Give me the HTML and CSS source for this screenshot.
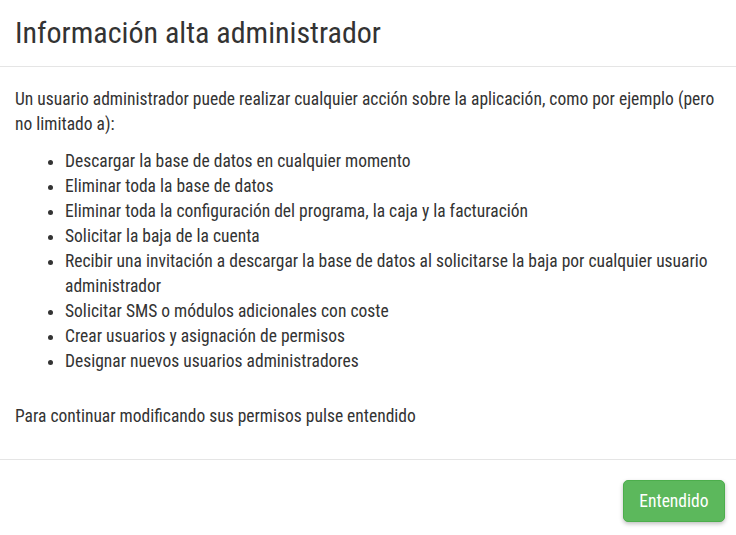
FILE: index.html
```html
<!DOCTYPE html>
<html lang="es">
<head>
  <meta charset="UTF-8">
  <meta name="viewport" content="width=device-width, initial-scale=1">
  <title>Información alta administrador</title>
  <link rel="stylesheet" href="styles.css">
</head>
<body>

  <div class="modal">
    <div class="modal-header">
      <h2>Información alta administrador</h2>
    </div>
    <div class="modal-body">
      <p>Un usuario administrador puede realizar cualquier acción sobre la aplicación, como por ejemplo (pero no limitado a):</p>
      <ul>
        <li>Descargar la base de datos en cualquier momento</li>
        <li>Eliminar toda la base de datos</li>
        <li>Eliminar toda la configuración del programa, la caja y la facturación</li>
        <li>Solicitar la baja de la cuenta</li>
        <li>Recibir una invitación a descargar la base de datos al solicitarse la baja por cualquier usuario administrador</li>
        <li>Solicitar SMS o módulos adicionales con coste</li>
        <li>Crear usuarios y asignación de permisos</li>
        <li>Designar nuevos usuarios administradores</li>
      </ul>
      <p class="final">Para continuar modificando sus permisos pulse entendido</p>
    </div>
    <div class="modal-footer">
      <button type="button">Entendido</button>
    </div>
  </div>

</body>
</html>
```

FILE: styles.css
```css
body {
  margin: 0;
  font-family: "Roboto Condensed", Roboto, "Liberation Sans", sans-serif;
  font-stretch: 87.5%;
  color: #333;
  background-color: #fff;
}

.modal {
  width: 736px;
}

.modal-header {
  padding: 15px;
  border-bottom: 1px solid #e5e5e5;
}

h2 {
  margin: 0;
  font-size: 30px;
  font-weight: 400;
  line-height: 36px;
}

.modal-body {
  padding: 20px 15px 30px;
  font-size: 17.5px;
  line-height: 25px;
}

p {
  margin: 0;
}

ul {
  margin: 12px 0 30px;
  padding-left: 50px;
}

.modal-footer {
  padding: 20px 11px 13px;
  border-top: 1px solid #e5e5e5;
  text-align: right;
}

button {
  background-color: #5cb85c;
  color: #fff;
  font-family: inherit;
  font-stretch: inherit;
  font-size: 17.5px;
  line-height: 20px;
  padding: 10px 15.5px;
  border: 1px solid #4cae4c;
  border-radius: 5px;
  box-shadow: 0 2px 4px rgba(0,0,0,0.25);
  cursor: pointer;
}
```
